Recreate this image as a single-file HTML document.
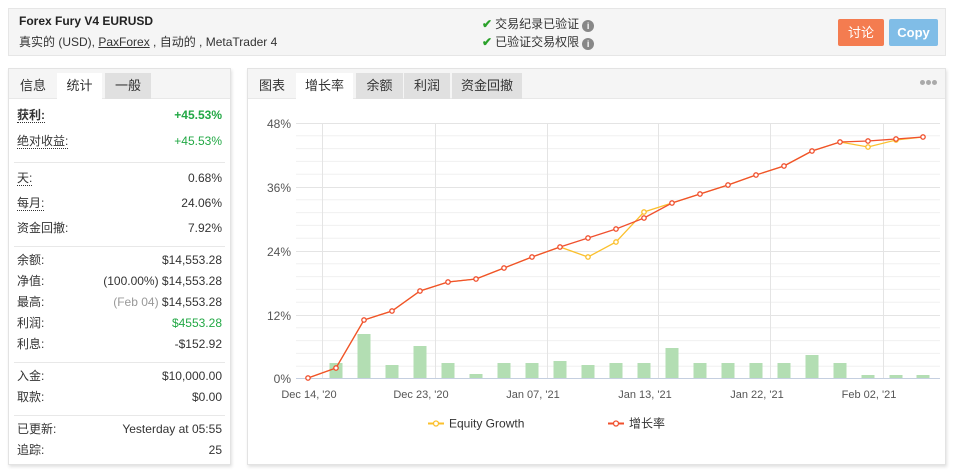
<!DOCTYPE html>
<html><head><meta charset="utf-8"><style>
*{box-sizing:border-box;margin:0;padding:0}
body{width:954px;height:473px;background:#fff;font-family:"Liberation Sans","Noto Sans CJK SC",sans-serif;font-size:12px;color:#333;position:relative;overflow:hidden}
.hdr{position:absolute;left:8px;top:8px;width:938px;height:48px;background:#f5f5f5;border:1px solid #e6e6e6}
.t1{position:absolute;left:10px;top:5px;font-weight:bold;font-size:12px;color:#222}
.t2{position:absolute;left:10px;top:24px;font-size:12px;color:#333}
.t2 u{text-decoration:underline}
.ver{position:absolute;left:473px;font-size:12px;color:#333}
.ck{color:#2aa12a;font-weight:bold;margin-right:3px}
.inf{display:inline-block;width:12px;height:12px;border-radius:50%;background:#888;color:#fff;font-size:9px;text-align:center;line-height:12px;font-weight:bold;margin-left:3px;vertical-align:-1px}
.btn{position:absolute;top:10px;height:27px;color:#fff;text-align:center;line-height:27px;border-radius:2px;font-size:13px}
.pan{position:absolute;top:68px;height:397px;background:#fff;border:1px solid #e3e3e3;box-shadow:1px 2px 3px rgba(0,0,0,.12)}
.tabs{position:absolute;left:0;top:0;right:0;height:30px;background:#f5f5f5;border-bottom:1px solid #e8e8e8}
.tab{position:absolute;top:4px;height:26px;line-height:26px;text-align:center;font-size:13px;color:#333}
.tab.a{background:#fff;height:27px}
.tab.g{background:#e0e0e0}
.row{position:absolute;left:8px;right:8px;height:16px;font-size:12px;line-height:16px}
.row .l{position:absolute;left:0;top:0;height:16px;line-height:16px}
.row .l span{border-bottom:1px dotted #333}
.row .r{position:absolute;right:0;top:0;height:16px;line-height:16px}
.sep{position:absolute;left:5px;right:5px;height:1px;background:#e8e8e8}
.gr{color:#22a845}
</style></head><body>
<div class="hdr">
<div class="t1">Forex Fury V4 EURUSD</div>
<div class="t2">真实的 (USD), <u>PaxForex</u> , 自动的 , MetaTrader 4</div>
<div class="ver" style="top:6px"><span class="ck">✔</span>交易纪录已验证<span class="inf">i</span></div>
<div class="ver" style="top:24px"><span class="ck">✔</span>已验证交易权限<span class="inf">i</span></div>
<div class="btn" style="left:829px;width:46px;background:#f47c50">讨论</div>
<div class="btn" style="left:880px;width:49px;background:#80bde7;font-weight:bold">Copy</div>
</div>

<div class="pan" style="left:8px;width:223px">
<div class="tabs">
<div class="tab" style="left:0;width:48px">信息</div>
<div class="tab a" style="left:48px;width:45px">统计</div>
<div class="tab g" style="left:96px;width:46px">一般</div>
</div>
<div class="row" style="top:38px"><span class="l" style="font-weight:bold"><span>获利:</span></span><span class="r gr" style="font-weight:bold">+45.53%</span></div>
<div class="row" style="top:64px"><span class="l"><span>绝对收益:</span></span><span class="r gr">+45.53%</span></div>
<div class="sep" style="top:93px"></div>
<div class="row" style="top:101px"><span class="l"><span>天:</span></span><span class="r">0.68%</span></div>
<div class="row" style="top:126px"><span class="l"><span>每月:</span></span><span class="r">24.06%</span></div>
<div class="row" style="top:151px"><span class="l">资金回撤:</span><span class="r">7.92%</span></div>
<div class="sep" style="top:177px"></div>
<div class="row" style="top:183px"><span class="l">余额:</span><span class="r">$14,553.28</span></div>
<div class="row" style="top:204px"><span class="l">净值:</span><span class="r">(100.00%) $14,553.28</span></div>
<div class="row" style="top:225px"><span class="l">最高:</span><span class="r"><span style="color:#999">(Feb 04)</span> $14,553.28</span></div>
<div class="row" style="top:246px"><span class="l">利润:</span><span class="r gr">$4553.28</span></div>
<div class="row" style="top:267px"><span class="l">利息:</span><span class="r">-$152.92</span></div>
<div class="sep" style="top:293px"></div>
<div class="row" style="top:299px"><span class="l">入金:</span><span class="r">$10,000.00</span></div>
<div class="row" style="top:320px"><span class="l">取款:</span><span class="r">$0.00</span></div>
<div class="sep" style="top:346px"></div>
<div class="row" style="top:352px"><span class="l">已更新:</span><span class="r">Yesterday at 05:55</span></div>
<div class="row" style="top:373px"><span class="l">追踪:</span><span class="r">25</span></div>
</div>

<div class="pan" style="left:247px;width:699px">
<div class="tabs">
<div class="tab" style="left:0;width:48px">图表</div>
<div class="tab a" style="left:48px;width:57px">增长率</div>
<div class="tab g" style="left:108px;width:47px">余额</div>
<div class="tab g" style="left:156px;width:46px">利润</div>
<div class="tab g" style="left:204px;width:70px">资金回撤</div>
<div style="position:absolute;right:9px;top:11px;width:16px;height:5px">
<span style="position:absolute;left:0;width:5px;height:5px;border-radius:50%;background:#aaa"></span>
<span style="position:absolute;left:6px;width:5px;height:5px;border-radius:50%;background:#aaa"></span>
<span style="position:absolute;left:12px;width:5px;height:5px;border-radius:50%;background:#aaa"></span>
</div>
</div>
</div>

<svg style="position:absolute;left:0;top:0" width="954" height="473" font-family="Liberation Sans, Noto Sans CJK SC, sans-serif">
<g stroke="#f0f0f0" stroke-width="1">
<line x1="296" x2="940" y1="135.8" y2="135.8"/><line x1="296" x2="940" y1="148.6" y2="148.6"/><line x1="296" x2="940" y1="161.4" y2="161.4"/><line x1="296" x2="940" y1="174.2" y2="174.2"/>
<line x1="296" x2="940" y1="199.8" y2="199.8"/><line x1="296" x2="940" y1="212.6" y2="212.6"/><line x1="296" x2="940" y1="225.4" y2="225.4"/><line x1="296" x2="940" y1="238.2" y2="238.2"/>
<line x1="296" x2="940" y1="263.8" y2="263.8"/><line x1="296" x2="940" y1="276.6" y2="276.6"/><line x1="296" x2="940" y1="289.4" y2="289.4"/><line x1="296" x2="940" y1="302.2" y2="302.2"/>
<line x1="296" x2="940" y1="327.8" y2="327.8"/><line x1="296" x2="940" y1="340.6" y2="340.6"/><line x1="296" x2="940" y1="353.4" y2="353.4"/><line x1="296" x2="940" y1="366.2" y2="366.2"/>
</g>
<g stroke="#e4e4e4" stroke-width="1">
<line x1="296" x2="940" y1="123.5" y2="123.5"/><line x1="296" x2="940" y1="187.5" y2="187.5"/><line x1="296" x2="940" y1="251.5" y2="251.5"/><line x1="296" x2="940" y1="315.5" y2="315.5"/>
<line x1="322.5" x2="322.5" y1="123" y2="378"/><line x1="435.5" x2="435.5" y1="123" y2="378"/><line x1="547.5" x2="547.5" y1="123" y2="378"/><line x1="658.5" x2="658.5" y1="123" y2="378"/><line x1="770.5" x2="770.5" y1="123" y2="378"/><line x1="883.5" x2="883.5" y1="123" y2="378"/>
</g>
<g fill="#b3deb3">
<rect x="329.5" y="363" width="13" height="15"/><rect x="357.5" y="334" width="13" height="44"/><rect x="385.5" y="365" width="13" height="13"/><rect x="413.5" y="346" width="13" height="32"/><rect x="441.5" y="363" width="13" height="15"/><rect x="469.5" y="374" width="13" height="4"/><rect x="497.5" y="363" width="13" height="15"/><rect x="525.5" y="363" width="13" height="15"/><rect x="553.5" y="361" width="13" height="17"/><rect x="581.5" y="365" width="13" height="13"/><rect x="609.5" y="363" width="13" height="15"/><rect x="637.5" y="363" width="13" height="15"/><rect x="665.5" y="348" width="13" height="30"/><rect x="693.5" y="363" width="13" height="15"/><rect x="721.5" y="363" width="13" height="15"/><rect x="749.5" y="363" width="13" height="15"/><rect x="777.5" y="363" width="13" height="15"/><rect x="805.5" y="355" width="13" height="23"/><rect x="833.5" y="363" width="13" height="15"/><rect x="861.5" y="375" width="13" height="3"/><rect x="889.5" y="375" width="13" height="3"/><rect x="916.5" y="375" width="13" height="3"/>
</g>
<line x1="296" x2="940" y1="378.5" y2="378.5" stroke="#c5cfe0"/>
<g font-size="12" fill="#555" text-anchor="end">
<text x="291" y="128">48%</text><text x="291" y="192">36%</text><text x="291" y="256">24%</text><text x="291" y="320">12%</text><text x="291" y="383">0%</text>
</g>
<g font-size="11" fill="#555" text-anchor="middle">
<text x="309" y="398">Dec 14, '20</text><text x="421" y="398">Dec 23, '20</text><text x="533" y="398">Jan 07, '21</text><text x="645" y="398">Jan 13, '21</text><text x="757" y="398">Jan 22, '21</text><text x="869" y="398">Feb 02, '21</text>
</g>
<polyline fill="none" stroke="#fbc02d" stroke-width="1.3" points="308,378 336,368 364,320 392,311 420,291 448,282 476,279 504,268 532,257 560,247 588,257 616,242 644,212 672,203 700,194 728,185 756,175 784,166 812,151 840,142 868,147 896,140 923,137"/>
<g fill="#fff" stroke="#fbc02d" stroke-width="1.3">
<circle cx="588" cy="257" r="2.2"/><circle cx="616" cy="242" r="2.2"/><circle cx="644" cy="212" r="2.2"/><circle cx="868" cy="147" r="2.2"/><circle cx="896" cy="140" r="2.2"/>
</g>
<polyline fill="none" stroke="#f0502e" stroke-width="1.3" points="308,378 336,368 364,320 392,311 420,291 448,282 476,279 504,268 532,257 560,247 588,238 616,229 644,218 672,203 700,194 728,185 756,175 784,166 812,151 840,142 868,141 896,139 923,137"/>
<g fill="#fff" stroke="#f0502e" stroke-width="1.3">
<circle cx="308" cy="378" r="2.2"/><circle cx="336" cy="368" r="2.2"/><circle cx="364" cy="320" r="2.2"/><circle cx="392" cy="311" r="2.2"/><circle cx="420" cy="291" r="2.2"/><circle cx="448" cy="282" r="2.2"/><circle cx="476" cy="279" r="2.2"/><circle cx="504" cy="268" r="2.2"/><circle cx="532" cy="257" r="2.2"/><circle cx="560" cy="247" r="2.2"/><circle cx="588" cy="238" r="2.2"/><circle cx="616" cy="229" r="2.2"/><circle cx="644" cy="218" r="2.2"/><circle cx="672" cy="203" r="2.2"/><circle cx="700" cy="194" r="2.2"/><circle cx="728" cy="185" r="2.2"/><circle cx="756" cy="175" r="2.2"/><circle cx="784" cy="166" r="2.2"/><circle cx="812" cy="151" r="2.2"/><circle cx="840" cy="142" r="2.2"/><circle cx="868" cy="141" r="2.2"/><circle cx="896" cy="139" r="2.2"/><circle cx="923" cy="137" r="2.2"/>
</g>
<line x1="428" x2="444" y1="423.5" y2="423.5" stroke="#fbc02d" stroke-width="2"/><circle cx="436" cy="423.5" r="2.5" fill="#fff" stroke="#fbc02d" stroke-width="1.3"/>
<text x="449" y="427.5" font-size="12" fill="#333">Equity Growth</text>
<line x1="608" x2="624" y1="423.5" y2="423.5" stroke="#f0502e" stroke-width="2"/><circle cx="616" cy="423.5" r="2.5" fill="#fff" stroke="#f0502e" stroke-width="1.3"/>
<text x="629" y="427.5" font-size="12" fill="#333">增长率</text>
</svg>
</body></html>
